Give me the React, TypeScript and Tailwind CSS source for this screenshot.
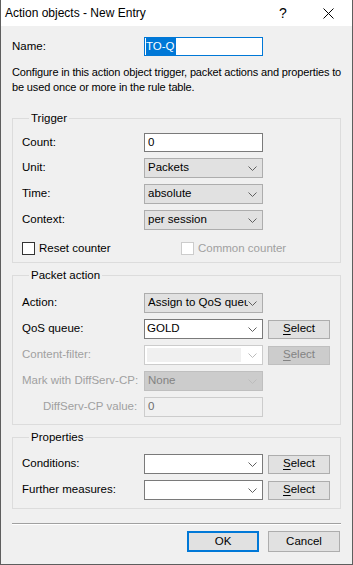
import React from "react";

const font = { fontFamily: '"Liberation Sans", Arial, sans-serif' };

function Chevron({ disabled }: { disabled?: boolean }) {
  return (
    <svg width="9" height="5" viewBox="0 0 9 5" className="shrink-0">
      <path d="M0.5 0.5 L4.5 4.5 L8.5 0.5" fill="none" stroke={disabled ? "#bcbcbc" : "#606060"} strokeWidth="1" />
    </svg>
  );
}

// read-only drop-down list (grey face)
function DropList({ value, disabled }: { value: string; disabled?: boolean }) {
  return (
    <div
      className={
        "flex h-[20px] w-[119px] items-center border pl-[3px] pr-[5px] " +
        (disabled ? "border-[#bfbfbf] bg-[#cccccc] text-[#838383]" : "border-[#adadad] bg-[#e1e1e1] text-black")
      }
    >
      <span className="flex-1 overflow-hidden whitespace-nowrap">{value}</span>
      <Chevron disabled={disabled} />
    </div>
  );
}

// editable combo box (white field)
function Combo({ value, disabled }: { value?: string; disabled?: boolean }) {
  return (
    <div
      className={
        "flex h-[20px] w-[119px] items-center border pr-[5px] " +
        (disabled ? "border-[#cccccc] bg-white" : "border-[#7a7a7a] bg-white")
      }
    >
      {disabled ? (
        <span className="ml-[2px] mr-[7px] h-[14px] flex-1 bg-[#f0f0f0]" />
      ) : (
        <span className="flex-1 overflow-hidden whitespace-nowrap pl-[2px]">{value}</span>
      )}
      <Chevron disabled={disabled} />
    </div>
  );
}

function SelectButton({ disabled }: { disabled?: boolean }) {
  return (
    <button
      className={
        "ml-[5px] h-[19px] w-[62px] border text-center leading-none " +
        (disabled ? "border-[#bfbfbf] bg-[#cccccc] text-[#838383]" : "border-[#adadad] bg-[#e1e1e1] text-black")
      }
    >
      <span className="underline underline-offset-[2px]">S</span>elect
    </button>
  );
}

function Row({
  label,
  children,
  disabled,
  indent,
  className = "",
}: {
  label: string;
  children: React.ReactNode;
  disabled?: boolean;
  indent?: boolean;
  className?: string;
}) {
  return (
    <div className={"flex items-center " + className}>
      <span
        className={
          "w-[122px] whitespace-nowrap " + (indent ? "pl-[21px] " : "") + (disabled ? "text-[#a0a0a0]" : "text-black")
        }
      >
        {label}
      </span>
      {children}
    </div>
  );
}

function Group({ title, children, className = "" }: { title: string; children: React.ReactNode; className?: string }) {
  return (
    <fieldset className={"border border-[#dcdcdc] pl-[9px] " + className}>
      <legend className="ml-[7px] px-[2px] leading-[14px]">{title}</legend>
      {children}
    </fieldset>
  );
}

export default function App() {
  return (
    <div
      className="flex h-[565px] w-[353px] flex-col border-x border-b border-[#5e5e5e] bg-[#f0f0f0] text-[11.5px] text-black"
      style={font}
    >
      {/* Title bar */}
      <div className="flex h-[26px] items-center bg-white text-[12px]">
        <span className="pl-[4px]">Action objects - New Entry</span>
        <span className="ml-auto w-[20px] text-center text-[14px]">?</span>
        <svg width="11" height="11" viewBox="0 0 11 11" className="ml-[30px] mr-[18px]">
          <path d="M0.5 0.5 L10.5 10.5 M10.5 0.5 L0.5 10.5" stroke="#000" strokeWidth="1" />
        </svg>
      </div>

      <div className="flex flex-1 flex-col px-[11px]">
        {/* Name */}
        <div className="mt-[11px] flex items-center">
          <span className="w-[132px]">Name:</span>
          <div className="flex h-[19px] w-[119px] items-center border border-[#0078d7] bg-white pl-[1px]">
            <span className="bg-[#0078d7] pr-[1px] text-white">TO-Q</span>
          </div>
        </div>

        <p className="-mr-[6px] mt-[9px] whitespace-nowrap text-[11px] leading-[15px] tracking-[-0.15px]">
          Configure in this action object trigger, packet actions and properties to
          <br />
          be used once or more in the rule table.
        </p>

        <Group title="Trigger" className="mt-[16px] h-[152px]">
          <Row label="Count:" className="mt-[8px]">
            <div className="flex h-[19px] w-[119px] items-center border border-[#7a7a7a] bg-white pl-[3px]">0</div>
          </Row>
          <Row label="Unit:" className="mt-[6px]">
            <DropList value="Packets" />
          </Row>
          <Row label="Time:" className="mt-[6px]">
            <DropList value="absolute" />
          </Row>
          <Row label="Context:" className="mt-[6px]">
            <DropList value="per session" />
          </Row>
          <div className="mt-[10px] flex items-center">
            <span className="h-[13px] w-[13px] border border-[#333] bg-white" />
            <span className="ml-[4px] w-[142px]">Reset counter</span>
            <span className="h-[13px] w-[13px] border border-[#cccccc] bg-white" />
            <span className="ml-[4px] text-[#a0a0a0]">Common counter</span>
          </div>
        </Group>

        <Group title="Packet action" className="mt-[5px] h-[157px]">
          <Row label="Action:" className="mt-[11px]">
            <DropList value="Assign to QoS queue" />
          </Row>
          <Row label="QoS queue:" className="mt-[6px]">
            <Combo value="GOLD" />
            <SelectButton />
          </Row>
          <Row label="Content-filter:" disabled className="mt-[6px]">
            <Combo disabled />
            <SelectButton disabled />
          </Row>
          <Row label="Mark with DiffServ-CP:" disabled className="mt-[6px]">
            <DropList value="None" disabled />
          </Row>
          <Row label="DiffServ-CP value:" disabled indent className="mt-[6px]">
            <div className="flex h-[20px] w-[119px] items-center border border-[#cccccc] bg-[#f0f0f0] pl-[3px] text-[#6d6d6d]">
              0
            </div>
          </Row>
        </Group>

        <Group title="Properties" className="mt-[5px] h-[79px]">
          <Row label="Conditions:" className="mt-[10px]">
            <Combo />
            <SelectButton />
          </Row>
          <Row label="Further measures:" className="mt-[6px]">
            <Combo />
            <SelectButton />
          </Row>
        </Group>

        <div className="mt-[14px] h-0 border-t border-[#a0a0a0] border-b border-b-white" />

        <div className="mt-[6px] flex justify-end gap-[9px] pr-[1px]">
          <button className="h-[21px] w-[72px] border-2 border-[#0078d7] bg-[#e1e1e1]">OK</button>
          <button className="h-[21px] w-[72px] border border-[#adadad] bg-[#e1e1e1]">Cancel</button>
        </div>
      </div>
    </div>
  );
}
